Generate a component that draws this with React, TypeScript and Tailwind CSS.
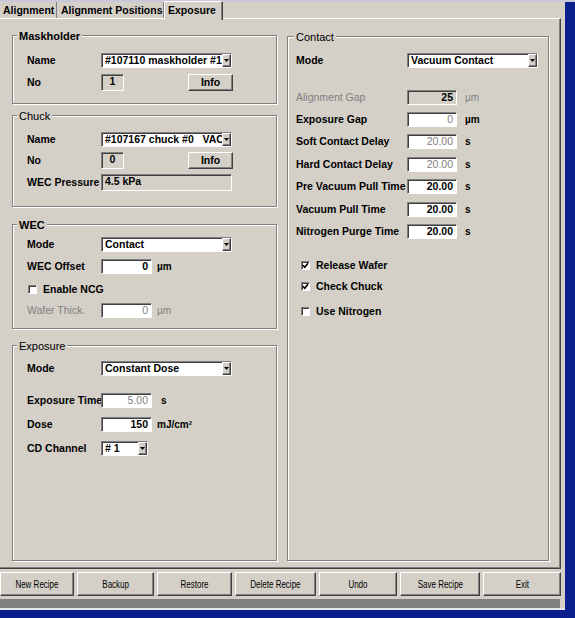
import React from 'react';

const sunken =
  'border border-t-[#808080] border-l-[#808080] border-b-white border-r-white shadow-[inset_1px_1px_0_#404040]';
const raised =
  'border border-t-white border-l-white border-b-[#404040] border-r-[#404040] shadow-[inset_-1px_-1px_0_#808080]';

interface GroupProps {
  title: string;
  className: string;
  titleClass?: string;
  bodyClass: string;
  children: React.ReactNode;
}

const Group: React.FC<GroupProps> = ({ title, className, titleClass = 'ml-[4px]', bodyClass, children }) => (
  <div className={`border border-[#808080] shadow-[inset_1px_1px_0_#fff,1px_1px_0_#fff] ${className}`}>
    <div className={`-mt-[6px] h-[13px] w-fit bg-[#d4d0c8] px-[2px] text-[11px] leading-[13px] ${titleClass}`}>
      {title}
    </div>
    <div className={bodyClass}>{children}</div>
  </div>
);

const Arrow = () => (
  <svg width="5" height="3" viewBox="0 0 5 3">
    <path d="M0 0H5L2.5 3Z" fill="#000" />
  </svg>
);

const Combo: React.FC<{ value: string; w: string }> = ({ value, w }) => (
  <div className={`flex h-[15px] shrink-0 bg-white ${sunken} ${w}`}>
    <span className="min-w-0 flex-1 overflow-hidden whitespace-pre pl-[3px] leading-[13px]">{value}</span>
    <span className={`flex w-[9px] items-center justify-center bg-[#d4d0c8] ${raised}`}>
      <Arrow />
    </span>
  </div>
);

interface FieldProps {
  value: string;
  w: string;
  h?: string;
  gray?: boolean;
  dim?: boolean;
  align?: string;
}

const Field: React.FC<FieldProps> = ({ value, w, h = 'h-[15px]', gray, dim, align = 'text-right pr-[3px]' }) => (
  <div
    className={`shrink-0 overflow-hidden whitespace-nowrap leading-[13px] ${sunken} ${w} ${h} ${align} ${
      gray ? 'bg-[#d4d0c8]' : 'bg-white'
    } ${dim ? 'font-normal text-[#808080]' : ''}`}
  >
    {value}
  </div>
);

const Row: React.FC<{ label: string; lw: string; className: string; dim?: boolean; children: React.ReactNode }> = ({
  label,
  lw,
  className,
  dim,
  children
}) => (
  <div className={`flex items-center ${className}`}>
    <span className={`shrink-0 whitespace-nowrap ${lw} ${dim ? 'font-normal text-[#808080]' : ''}`}>{label}</span>
    {children}
  </div>
);

const Unit: React.FC<{ text: string; className?: string; dim?: boolean }> = ({ text, className = 'ml-[5px]', dim }) => (
  <span className={`text-[10px] ${className} ${dim ? 'font-normal text-[#808080]' : ''}`}>{text}</span>
);

const Check: React.FC<{ label: string; checked?: boolean; className: string }> = ({ label, checked, className }) => (
  <div className={`flex h-[13px] items-center ${className}`}>
    <span className={`flex h-[9px] w-[9px] items-center justify-center bg-white ${sunken}`}>
      {checked && (
        <svg width="7" height="7" viewBox="0 0 7 7">
          <path d="M1 3.2L2.8 5.2L6 1.2" stroke="#000" strokeWidth="1.6" fill="none" />
        </svg>
      )}
    </span>
    <span className="ml-[6px]">{label}</span>
  </div>
);

const buttons: { label: string; w: string }[] = [
  { label: 'New Recipe', w: 'w-[74px]' },
  { label: 'Backup', w: 'w-[77px]' },
  { label: 'Restore', w: 'w-[75px]' },
  { label: 'Delete Recipe', w: 'w-[81px]' },
  { label: 'Undo', w: 'w-[78px]' },
  { label: 'Save Recipe', w: 'w-[80px]' },
  { label: 'Exit', w: 'w-[78px]' }
];

const L = 'w-[74px]';
const R = 'w-[111px]';

export default function App() {
  return (
    <div className="flex h-[618px] w-[575px] flex-col overflow-hidden bg-[#d4d0c8] font-['Liberation_Sans',Arial,sans-serif] text-[10.5px] font-bold text-black">
      <div className="h-[2px] shrink-0 bg-[#c9c7da]" />
      <div className="flex flex-1">
        <div className="flex w-[565px] flex-col">
          {/* tabs */}
          <div className="flex h-[16px] shrink-0 items-start">
            <div className="h-[16px] w-[57px] border-r border-[#808080] pl-[3px] leading-[17px]">Alignment</div>
            <div className="h-[16px] w-[107px] border-r border-[#808080] pl-[4px] leading-[17px]">
              Alignment Positions
            </div>
            <div className="relative z-10 -mt-px h-[19px] w-[59px] border-l border-r border-t border-l-white border-t-white border-r-[#404040] bg-[#d4d0c8] pl-[3px] leading-[16px] shadow-[inset_-1px_0_0_#808080]">
              Exposure
            </div>
          </div>

          {/* tab page */}
          <div className="flex h-[551px] w-[561px] shrink-0 border-b border-r border-t border-t-white border-b-[#404040] border-r-[#404040] pl-[12px] pt-[16px] shadow-[inset_-1px_-1px_0_#808080]">
            <div className="flex w-[265px] flex-col">
              <Group title="Maskholder" className="h-[69px]" bodyClass="pl-[14px]" titleClass="ml-[4px] font-bold">
                <Row label="Name" lw={L} className="mt-[10px] h-[15px]">
                  <Combo value="#107110 maskholder #1" w="w-[131px]" />
                </Row>
                <Row label="No" lw={L} className="mt-[6px] h-[17px]">
                  <Field value="1" w="w-[23px]" h="h-[17px]" gray align="text-center" />
                  <div className={`ml-[64px] h-[17px] w-[45px] text-center leading-[15px] ${raised}`}>Info</div>
                </Row>
              </Group>

              <Group title="Chuck" className="mt-[11px] h-[92px]" bodyClass="pl-[14px]" titleClass="ml-[4px] font-normal">
                <Row label="Name" lw={L} className="mt-[9px] h-[15px]">
                  <Combo value="#107167 chuck #0   VAC" w="w-[131px]" />
                </Row>
                <Row label="No" lw={L} className="mt-[5px] h-[17px]">
                  <Field value="0" w="w-[23px]" h="h-[17px]" gray align="text-center" />
                  <div className={`ml-[64px] h-[17px] w-[45px] text-center leading-[15px] ${raised}`}>Info</div>
                </Row>
                <Row label="WEC Pressure" lw={L} className="mt-[5px] h-[17px]">
                  <Field value="4.5 kPa" w="w-[131px]" h="h-[17px]" gray align="text-left pl-[3px]" />
                </Row>
              </Group>

              <Group title="WEC" className="mt-[17px] h-[105px]" bodyClass="pl-[14px]" titleClass="ml-[4px] font-bold">
                <Row label="Mode" lw={L} className="mt-[5px] h-[15px]">
                  <Combo value="Contact" w="w-[131px]" />
                </Row>
                <Row label="WEC Offset" lw={L} className="mt-[7px] h-[15px]">
                  <Field value="0" w="w-[51px]" />
                  <Unit text="µm" />
                </Row>
                <Check label="Enable NCG" className="mt-[9px] ml-[1px]" />
                <Row label="Wafer Thick." lw={L} className="mt-[7px] h-[15px]" dim>
                  <Field value="0" w="w-[51px]" dim />
                  <Unit text="µm" dim />
                </Row>
              </Group>

              <Group title="Exposure" className="mt-[16px] h-[216px]" bodyClass="pl-[14px]" titleClass="ml-[4px] font-normal">
                <Row label="Mode" lw={L} className="mt-[8px] h-[15px]">
                  <Combo value="Constant Dose" w="w-[131px]" />
                </Row>
                <Row label="Exposure Time" lw={L} className="mt-[17px] h-[15px]">
                  <Field value="5.00" w="w-[51px]" dim />
                  <Unit text="s" className="ml-[9px]" />
                </Row>
                <Row label="Dose" lw={L} className="mt-[9px] h-[15px]">
                  <Field value="150" w="w-[51px]" />
                  <Unit text="mJ/cm²" />
                </Row>
                <Row label="CD Channel" lw={L} className="mt-[9px] h-[15px]">
                  <Combo value="# 1" w="w-[47px]" />
                </Row>
              </Group>
            </div>

            <div className="ml-[10px] flex w-[262px] flex-col pt-[1px]">
              <Group title="Contact" className="h-[525px]" bodyClass="pl-[8px]" titleClass="ml-[6px] font-normal">
                <Row label="Mode" lw={R} className="mt-[9px] h-[15px]">
                  <Combo value="Vacuum Contact" w="w-[131px]" />
                </Row>
                <Row label="Alignment Gap" lw={R} className="mt-[22px] h-[15px]" dim>
                  <Field value="25" w="w-[50px]" gray />
                  <Unit text="µm" className="ml-[8px]" dim />
                </Row>
                <Row label="Exposure Gap" lw={R} className="mt-[7px] h-[15px]">
                  <Field value="0" w="w-[50px]" dim />
                  <Unit text="µm" className="ml-[8px]" />
                </Row>
                <Row label="Soft Contact Delay" lw={R} className="mt-[7px] h-[15px]">
                  <Field value="20.00" w="w-[50px]" dim />
                  <Unit text="s" className="ml-[8px]" />
                </Row>
                <Row label="Hard Contact Delay" lw={R} className="mt-[8px] h-[15px]">
                  <Field value="20.00" w="w-[50px]" dim />
                  <Unit text="s" className="ml-[8px]" />
                </Row>
                <Row label="Pre Vacuum Pull Time" lw={R} className="mt-[7px] h-[15px]">
                  <Field value="20.00" w="w-[50px]" />
                  <Unit text="s" className="ml-[8px]" />
                </Row>
                <Row label="Vacuum Pull Time" lw={R} className="mt-[8px] h-[15px]">
                  <Field value="20.00" w="w-[50px]" />
                  <Unit text="s" className="ml-[8px]" />
                </Row>
                <Row label="Nitrogen Purge Time" lw={R} className="mt-[7px] h-[15px]">
                  <Field value="20.00" w="w-[50px]" />
                  <Unit text="s" className="ml-[8px]" />
                </Row>
                <Check label="Release Wafer" checked className="mt-[20px] ml-[5px]" />
                <Check label="Check Chuck" checked className="mt-[8px] ml-[5px]" />
                <Check label="Use Nitrogen" className="mt-[12px] ml-[5px]" />
              </Group>
            </div>
          </div>

          {/* command buttons */}
          <div className="mt-[3px] flex h-[24px] shrink-0 gap-[3px]">
            {buttons.map((b) => (
              <div
                key={b.label}
                className={`flex h-[24px] items-center justify-center text-[10px] font-normal ${raised} ${b.w}`}
              >
                <span className="inline-block scale-x-[0.8] whitespace-nowrap">{b.label}</span>
              </div>
            ))}
          </div>

          {/* status bar */}
          <div className="mt-[3px] h-[9px] w-[560px] shrink-0 bg-[#808080]" />
          <div className="h-[2px] shrink-0 bg-[#e8e8f0]" />
          <div className="flex-1 bg-[#0a1e8c]" />
        </div>
        <div className="w-[10px] bg-[#0a1e8c]" />
      </div>
    </div>
  );
}
